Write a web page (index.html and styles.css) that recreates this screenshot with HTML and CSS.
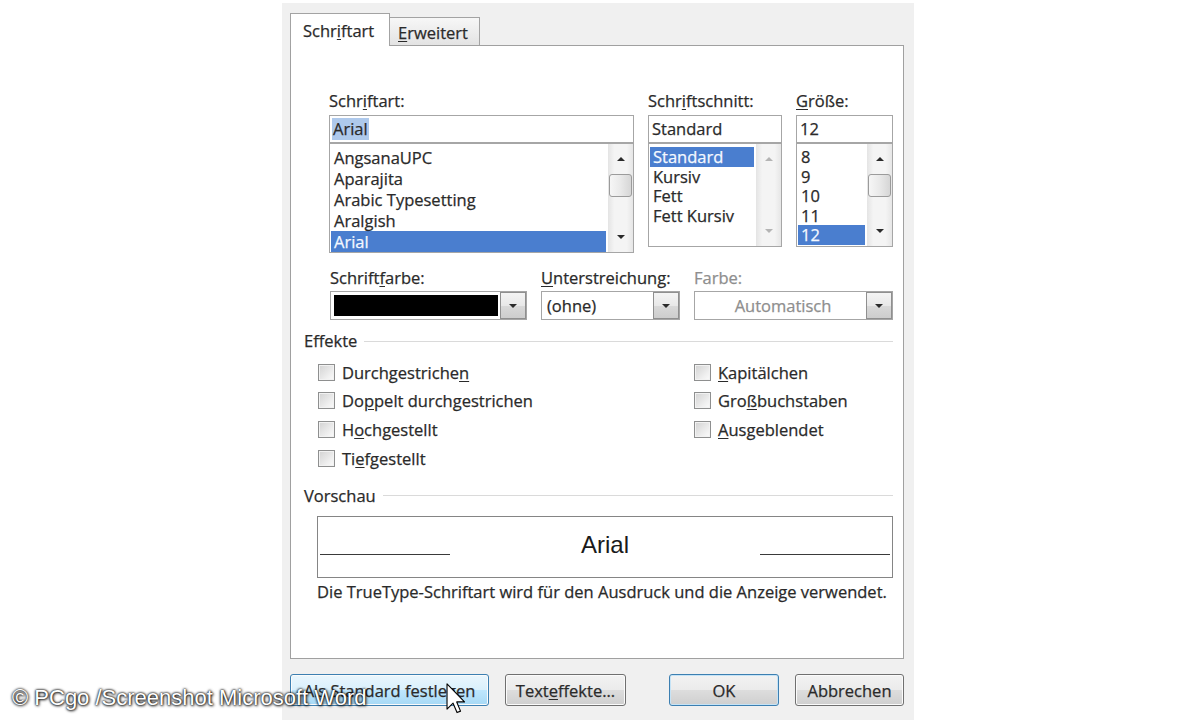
FILE: index.html
```html
<!DOCTYPE html>
<html lang="de">
<head>
    <meta charset="UTF-8">
    <meta name="viewport" content="width=device-width, initial-scale=1.0">
    <title>Schriftart</title>
    <link rel="stylesheet" href="styles.css">
</head>
<body>
    <div class="dialog">
        <div class="tabs">
            <div class="tab active">Schr<u>i</u>ftart</div>
            <div class="tab second"><u>E</u>rweitert</div>
        </div>

        <div class="panel">
            <!-- Schriftart / Schriftschnitt / Größe -->
            <div class="font-grid">
                <div class="field">
                    <div class="label">Schr<u>i</u>ftart:</div>
                    <div class="textbox"><span class="marked">Arial</span></div>
                    <div class="listbox list-fonts">
                        <ul class="items">
                            <li>AngsanaUPC</li>
                            <li>Aparajita</li>
                            <li>Arabic Typesetting</li>
                            <li>Aralgish</li>
                            <li class="selected">Arial</li>
                        </ul>
                        <div class="scrollbar">
                            <span class="arrow-box"><span class="arrow up"></span></span>
                            <span class="thumb"></span>
                            <span class="track"></span>
                            <span class="arrow-box"><span class="arrow down"></span></span>
                        </div>
                    </div>
                </div>

                <div class="field">
                    <div class="label">Schr<u>i</u>ftschnitt:</div>
                    <div class="textbox">Standard</div>
                    <div class="listbox list-small">
                        <ul class="items">
                            <li class="selected">Standard</li>
                            <li>Kursiv</li>
                            <li>Fett</li>
                            <li>Fett Kursiv</li>
                        </ul>
                        <div class="scrollbar disabled">
                            <span class="arrow-box"><span class="arrow up"></span></span>
                            <span class="track"></span>
                            <span class="arrow-box"><span class="arrow down"></span></span>
                        </div>
                    </div>
                </div>

                <div class="field">
                    <div class="label"><u>G</u>röße:</div>
                    <div class="textbox">12</div>
                    <div class="listbox list-small">
                        <ul class="items">
                            <li>8</li>
                            <li>9</li>
                            <li>10</li>
                            <li>11</li>
                            <li class="selected">12</li>
                        </ul>
                        <div class="scrollbar">
                            <span class="arrow-box"><span class="arrow up"></span></span>
                            <span class="thumb"></span>
                            <span class="track"></span>
                            <span class="arrow-box"><span class="arrow down"></span></span>
                        </div>
                    </div>
                </div>
            </div>

            <!-- Farbe und Unterstreichung -->
            <div class="combo-grid">
                <div class="field">
                    <div class="label">Schrift<u>f</u>arbe:</div>
                    <div class="combo">
                        <span class="swatch"></span>
                        <span class="drop"><span class="arrow down"></span></span>
                    </div>
                </div>
                <div class="field">
                    <div class="label"><u>U</u>nterstreichung:</div>
                    <div class="combo">
                        <span class="combo-text">(ohne)</span>
                        <span class="drop"><span class="arrow down"></span></span>
                    </div>
                </div>
                <div class="field disabled">
                    <div class="label">Farbe:</div>
                    <div class="combo">
                        <span class="combo-text center">Automatisch</span>
                        <span class="drop"><span class="arrow down"></span></span>
                    </div>
                </div>
            </div>

            <div class="group-title effects-title">Effekte<span class="rule"></span></div>

            <div class="effects">
                <div class="effects-col left">
                    <div class="check"><span class="box"></span>Durchgestriche<u>n</u></div>
                    <div class="check"><span class="box"></span>Do<u>p</u>pelt durchgestrichen</div>
                    <div class="check"><span class="box"></span>H<u>o</u>chgestellt</div>
                    <div class="check"><span class="box"></span>Ti<u>e</u>fgestellt</div>
                </div>
                <div class="effects-col">
                    <div class="check"><span class="box"></span><u>K</u>apitälchen</div>
                    <div class="check"><span class="box"></span>Gro<u>ß</u>buchstaben</div>
                    <div class="check"><span class="box"></span><u>A</u>usgeblendet</div>
                </div>
            </div>

            <div class="group-title preview-title">Vorschau<span class="rule"></span></div>

            <div class="preview">
                <span class="baseline"></span>
                <span class="sample">Arial</span>
                <span class="baseline"></span>
            </div>
            <p class="note">Die TrueType-Schriftart wird für den Ausdruck und die Anzeige verwendet.</p>
        </div>

        <div class="buttons">
            <button class="btn hover wide">Als Standard festle<u>g</u>en</button>
            <button class="btn effects-btn">Text<u>e</u>ffekte...</button>
            <button class="btn default ok">OK</button>
            <button class="btn cancel">Abbrechen</button>
        </div>
    </div>

    <div class="watermark">© PCgo /Screenshot Microsoft Word</div>

    <svg class="cursor" width="20" height="31" viewBox="0 0 12.5 19.5">
        <path d="M0.6 0.6 L0.6 16.4 L4.4 12.7 L6.9 18.6 L9.1 17.7 L6.7 11.9 L11.6 11.9 Z" fill="#fff" stroke="#000" stroke-width="0.7" stroke-linejoin="round"/>
    </svg>
</body>
</html>
```

FILE: styles.css
```css
/* Page */
body {
    margin: 0;
    background: #ffffff;
    font-family: "Open Sans", "Noto Sans", sans-serif;
    font-size: 16.5px;
    color: #2a2a2a;
    -webkit-text-stroke: 0.25px currentColor;
    overflow: hidden;
}

u {
    text-underline-offset: 2px;
}

/* Dialog frame */
.dialog {
    width: 632px;
    height: 717px;
    margin: 3px 0 0 282px;
    padding: 10px 10px 0 8px;
    box-sizing: border-box;
    background: #f0f0f0;
}

/* Tabs */
.tabs {
    display: flex;
    align-items: flex-end;
    height: 32px;
}

.tab {
    box-sizing: border-box;
    height: 28px;
    border: 1px solid #a3a3a3;
    border-bottom: none;
    background: linear-gradient(#f7f7f7, #e3e3e3);
    padding: 4px 0 0 8px;
    line-height: 22px;
}

.tab.active {
    width: 100px;
    height: 33px;
    margin-bottom: -1px;
    padding: 6px 0 0 12px;
    background: #ffffff;
    position: relative;
    z-index: 1;
}

.tab.second {
    width: 90px;
    border-left: none;
}

/* Tab page */
.panel {
    box-sizing: border-box;
    height: 614px;
    border: 1px solid #a0a0a0;
    background: #ffffff;
}

.label {
    line-height: 20px;
    margin-bottom: 4px;
    white-space: nowrap;
}

.font-grid {
    display: grid;
    grid-template-columns: 305px 134px 97px;
    column-gap: 14px;
    margin: 45px 0 0 38px;
}

.textbox {
    box-sizing: border-box;
    height: 28px;
    border: 1px solid #a6a6a6;
    padding-left: 3px;
    line-height: 26px;
}

.marked {
    display: inline-block;
    line-height: 22px;
    padding: 0 1px;
    margin-left: -1px;
    background: #aec9ec;
}

/* List boxes */
.listbox {
    box-sizing: border-box;
    display: flex;
    border: 1px solid #a6a6a6;
    overflow: hidden;
}

.list-fonts {
    height: 110px;
}

.list-small {
    height: 104px;
}

.items {
    flex: 1;
    list-style: none;
    margin: 0;
    padding: 3px 2px 0 1px;
}

.items li {
    padding-left: 3px;
    line-height: 21px;
    white-space: nowrap;
}

.list-small .items li {
    line-height: 19.5px;
}

.items li.selected {
    background: #4a7ecf;
    color: #f4f8ff;
}

.scrollbar {
    width: 25px;
    display: flex;
    flex-direction: column;
    background: linear-gradient(to right, #e4e4e4, #f4f4f4 25%, #f4f4f4 75%, #e6e6e6);
}

.arrow-box {
    height: 30px;
    display: flex;
    align-items: center;
    justify-content: center;
}

.track {
    flex: 1;
}

.thumb {
    height: 23px;
    margin: 0 1px;
    box-sizing: border-box;
    border: 1px solid #9b9b9b;
    border-radius: 3px;
    background: linear-gradient(to right, #f6f6f6, #e9e9e9 50%, #d6d6d6);
}

.arrow {
    width: 0;
    height: 0;
    border-left: 4px solid transparent;
    border-right: 4px solid transparent;
}

.arrow.up {
    border-bottom: 4px solid #2a2a2a;
}

.arrow.down {
    border-top: 4px solid #2a2a2a;
}

.scrollbar.disabled .arrow.up {
    border-bottom-color: #b4b4b4;
}

.scrollbar.disabled .arrow.down {
    border-top-color: #b4b4b4;
}

/* Combo boxes */
.combo-grid {
    display: grid;
    grid-template-columns: 197px 139px 199px;
    column-gap: 14px;
    margin: 15px 0 0 39px;
}

.combo-grid .label {
    margin-bottom: 3px;
}

.combo {
    box-sizing: border-box;
    height: 29px;
    display: flex;
    border: 1px solid #a6a6a6;
    background: #ffffff;
}

.swatch {
    flex: 1;
    margin: 3px 2px 3px 3px;
    background: #000000;
}

.combo-text {
    flex: 1;
    padding-left: 5px;
    line-height: 27px;
}

.combo-text.center {
    text-align: center;
}

.drop {
    width: 26px;
    box-sizing: border-box;
    border: 1px solid #8f8f8f;
    background: linear-gradient(#f4f4f4, #e8e8e8 50%, #d9d9d9 51%, #cdcdcd);
    display: flex;
    align-items: center;
    justify-content: center;
}

.field.disabled .label,
.field.disabled .combo-text {
    color: #8e8e8e;
}

/* Group titles with a rule */
.group-title {
    display: flex;
    align-items: center;
    line-height: 20px;
    margin-left: 13px;
    margin-right: 10px;
}

.group-title .rule {
    flex: 1;
    height: 1px;
    margin-left: 7px;
    background: #dadada;
}

.effects-title {
    margin-top: 11px;
}

.preview-title {
    margin-top: 13px;
}

/* Check boxes */
.effects {
    display: flex;
    margin: 7px 0 0 27px;
}

.effects-col.left {
    width: 376px;
}

.check {
    height: 28.67px;
    display: flex;
    align-items: center;
    white-space: nowrap;
}

.box {
    width: 17px;
    height: 17px;
    box-sizing: border-box;
    margin-right: 7px;
    border: 1px solid #8e8f8f;
    box-shadow: inset 0 0 0 1px #f2f2f2;
    background: linear-gradient(135deg, #d2d2d2, #f0f0f0 70%, #fbfbfb);
}

/* Preview */
.preview {
    box-sizing: border-box;
    height: 62px;
    margin: 10px 10px 0 26px;
    padding: 0 2px;
    display: flex;
    border: 1px solid #858585;
}

.baseline {
    width: 130px;
    height: 37px;
    border-bottom: 1px solid #3a3a3a;
}

.sample {
    flex: 1;
    text-align: center;
    padding-top: 16px;
    font-family: "Liberation Sans", Arial, sans-serif;
    font-size: 24px;
    line-height: 24px;
    color: #1a1a1a;
    -webkit-text-stroke: 0;
}

.note {
    margin: 4px 0 0 26px;
    line-height: 20px;
    white-space: nowrap;
}

/* Buttons */
.buttons {
    display: flex;
    margin-top: 15px;
}

.btn {
    box-sizing: border-box;
    height: 32px;
    padding: 0;
    border: 1px solid #707070;
    border-radius: 3px;
    background: linear-gradient(#f2f2f2, #ebebeb 50%, #dddddd 51%, #cfcfcf);
    font-family: inherit;
    font-size: 16.5px;
    color: #2a2a2a;
    box-shadow: inset 0 0 0 1px #fbfbfb;
}

.btn.hover {
    border-color: #3c7fb1;
    background: linear-gradient(#eaf6fd, #d9f0fc 50%, #bee6fd 51%, #a7d9f5);
}

.btn.default {
    border-color: #3c7fb1;
    box-shadow: inset 0 0 0 1px #c5e3f6;
}

.wide {
    width: 199px;
}

.effects-btn {
    width: 121px;
    margin-left: 16px;
}

.ok {
    width: 110px;
    margin-left: auto;
}

.cancel {
    width: 109px;
    margin-left: 16px;
}

/* Overlays */
.watermark {
    position: absolute;
    left: 12px;
    top: 687px;
    font-family: "Liberation Sans", Arial, sans-serif;
    font-size: 22px;
    line-height: 22px;
    color: #ffffff;
    -webkit-text-stroke: 0;
    white-space: nowrap;
    text-shadow: 0 0 2px #000, 0 0 3px rgba(0, 0, 0, 0.8), 1px 1px 3px rgba(0, 0, 0, 0.7);
}

.cursor {
    position: absolute;
    left: 446px;
    top: 683px;
}
```
